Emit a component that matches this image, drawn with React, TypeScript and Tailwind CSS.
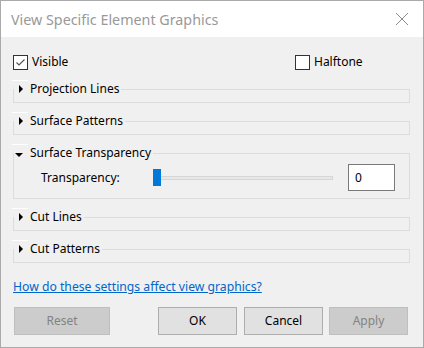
import React from 'react';

const RightArrow = () => (
  <svg width="16" height="16" viewBox="0 0 16 16" className="shrink-0">
    <polygon points="5,4 9,8 5,12" fill="#000" />
  </svg>
);

const DownArrow = () => (
  <svg width="16" height="16" viewBox="0 0 16 16" className="shrink-0">
    <polygon points="1,8 9,8 5,12" fill="#000" />
  </svg>
);

function Group({ title, open, children }: { title: string; open?: boolean; children?: React.ReactNode }) {
  return (
    <div className="mt-[9px]">
      <div className="h-px w-[16px] bg-white ml-[-1px]" />
      <fieldset className="border border-[#dcdcdc]">
        <legend className="flex items-center h-[16px] leading-[16px] pr-[2px]">
          {open ? <DownArrow /> : <RightArrow />}
          <span>{title}</span>
        </legend>
        {children ?? <div className="h-[5px]" />}
      </fieldset>
    </div>
  );
}

function Checkbox({ label, checked }: { label: string; checked?: boolean }) {
  return (
    <div className="flex items-center h-[16px]">
      <div className="w-[15px] h-[15px] border border-[#333333] bg-white flex items-center justify-center">
        {checked && (
          <svg width="13" height="13" viewBox="0 0 13 13">
            <path d="M2.5 6.5 L5 9 L10.5 3.5" stroke="#555" strokeWidth="1.2" fill="none" />
          </svg>
        )}
      </div>
      <span className="ml-[4px] leading-[16px]">{label}</span>
    </div>
  );
}

export default function App() {
  return (
    <div className="w-[424px] h-[348px] border border-[#aaaaaa] bg-[#f0f0f0] flex flex-col text-[12px] text-black font-['Noto_Sans',sans-serif]">
      {/* Title bar */}
      <div className="h-[36px] bg-white flex items-center justify-between pl-[10px] pr-[14px] shrink-0">
        <span className="text-[14.3px] text-[#999999] leading-[20px] mt-[1px]">View Specific Element Graphics</span>
        <svg width="14" height="14" viewBox="0 0 14 14">
          <path d="M1 1 L13 13 M13 1 L1 13" stroke="#8a8a8a" strokeWidth="1" fill="none" />
        </svg>
      </div>

      <div className="pl-[12px] pr-[13px] pt-[17px] flex flex-col">
        <div className="flex items-center">
          <div className="w-[282px]">
            <Checkbox label="Visible" checked />
          </div>
          <Checkbox label="Halftone" />
        </div>

        <div className="mt-[1px]" />
        <Group title="Projection Lines" />
        <Group title="Surface Patterns" />
        <Group title="Surface Transparency" open>
          <div className="flex items-center pl-[27px] pt-[3px] pb-[7px]">
            <span className="w-[112px] leading-[16px]">Transparency:</span>
            <div className="w-[180px] h-[17px] flex items-center">
              <div className="w-[8px] h-[17px] bg-[#0078d7] shrink-0" />
              <div className="flex-1 h-[4px] bg-[#e7e7e7] border border-[#d6d6d6] border-l-0" />
            </div>
            <div className="ml-[15px] w-[47px] h-[27px] bg-white border border-[#7a7a7a] flex items-center pl-[6px]">
              0
            </div>
          </div>
        </Group>
        <Group title="Cut Lines" />
        <Group title="Cut Patterns" />

        <a className="mt-[16px] leading-[16px] text-[12.2px] text-[#0066cc] underline self-start">
          How do these settings affect view graphics?
        </a>

        <div className="mt-[12px] flex">
          <button className="ml-[1px] w-[96px] h-[28px] bg-[#cccccc] border border-[#bfbfbf] text-[#838383]">Reset</button>
          <button className="ml-[48px] w-[79px] h-[28px] bg-[#e1e1e1] border border-[#adadad]">OK</button>
          <button className="ml-[7px] w-[79px] h-[28px] bg-[#e1e1e1] border border-[#adadad]">Cancel</button>
          <button className="ml-[6px] w-[79px] h-[28px] bg-[#cccccc] border border-[#bfbfbf] text-[#838383]">Apply</button>
        </div>
      </div>
    </div>
  );
}
